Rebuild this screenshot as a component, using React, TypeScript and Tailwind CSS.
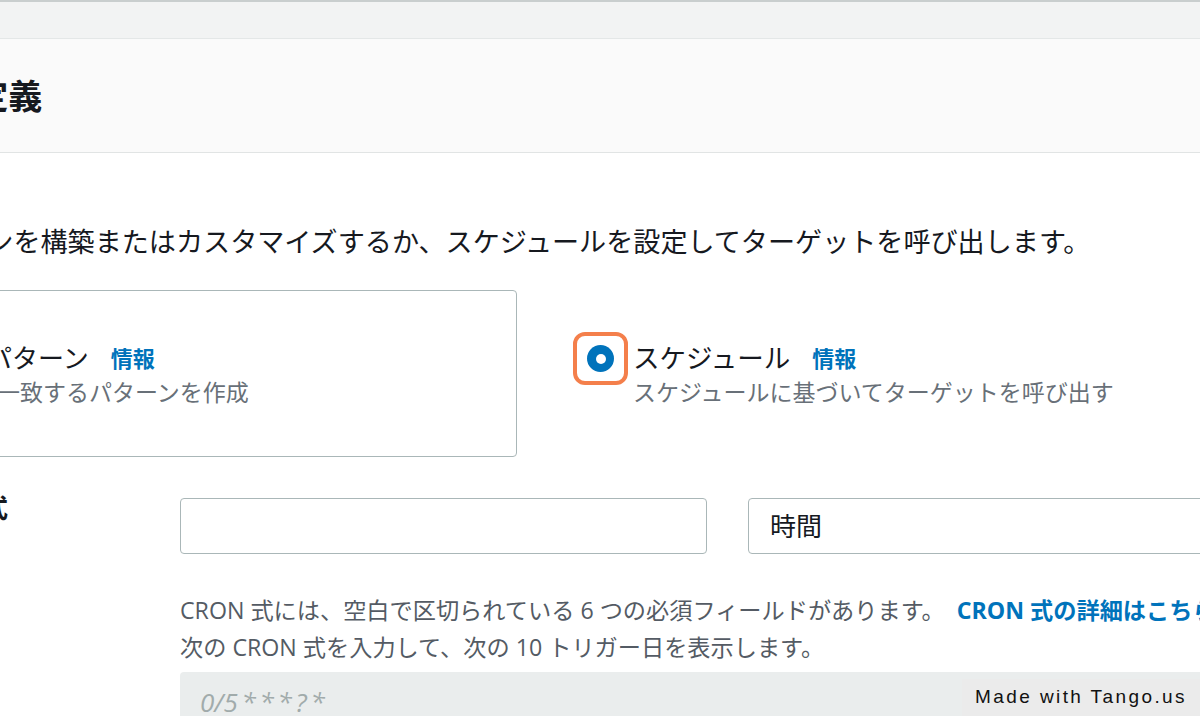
import React from 'react'

const FONT = "font-['Open_Sans','Noto_Sans_CJK_JP',sans-serif]"

function InfoLink() {
  return (
    <a className="ml-[22px] text-[22px] font-bold text-[#0073bb] leading-[34px]">
      情報
    </a>
  )
}

function ScheduleRadio() {
  return (
    <div className="flex h-[53px] w-[55px] shrink-0 items-center justify-center rounded-[12px] border-[4px] border-[#f47f4b]">
      <div className="flex h-[27px] w-[27px] items-center justify-center rounded-full bg-[#0073bb]">
        <div className="h-[10px] w-[10px] rounded-full bg-white" />
      </div>
    </div>
  )
}

export default function App() {
  return (
    <div
      className={`relative h-[716px] w-[1200px] overflow-hidden bg-white text-[#16191f] ${FONT}`}
    >
      {/* top strip */}
      <div className="h-[39px] border-t-[2px] border-b border-t-[#c9cece] border-b-[#e4e7e7] bg-[#f2f3f3]" />

      {/* page header */}
      <div className="flex h-[114px] items-center border-b border-[#e1e4e4] bg-[#fafafa]">
        <h1 className="ml-[-194px] whitespace-nowrap text-[34px] font-bold leading-none">
          パターンを定義
        </h1>
      </div>

      <p className="ml-[-202px] mt-[72px] whitespace-nowrap text-[27.1px] leading-[34px]">
        イベントパターンを構築またはカスタマイズするか、スケジュールを設定してターゲットを呼び出します。
      </p>

      {/* rule type tiles */}
      <div className="mt-[31px] flex">
        <div className="ml-[-200px] h-[167px] w-[717px] shrink-0 rounded-[4px] border border-[#aab7b8] pl-[81px] pt-[50px]">
          <div className="flex items-center whitespace-nowrap">
            <span className="text-[26px] leading-[34px]">イベントパターン</span>
            <InfoLink />
          </div>
          <div className="mt-[2px] whitespace-nowrap text-[23px] leading-[30px] text-[#687078]">
            イベントに一致するパターンを作成
          </div>
        </div>

        <div className="ml-[56px] flex items-start pt-[42px]">
          <ScheduleRadio />
          <div className="ml-[5px] mt-[9px]">
            <div className="flex items-center whitespace-nowrap">
              <span className="text-[26.5px] leading-[34px]">スケジュール</span>
              <InfoLink />
            </div>
            <div className="mt-[2px] whitespace-nowrap text-[23px] leading-[30px] text-[#687078]">
              スケジュールに基づいてターゲットを呼び出す
            </div>
          </div>
        </div>
      </div>

      {/* cron expression */}
      <div className="mt-[41px] flex items-start">
        <div className="w-[180px] shrink-0">
          <span className="ml-[-83px] block whitespace-nowrap text-[26px] font-bold leading-[20px]">
            cron 式
          </span>
        </div>
        <div className="flex-1">
          <div className="flex">
            <div className="h-[56px] w-[527px] shrink-0 rounded-[4px] border border-[#aab7b8] bg-white" />
            <div className="ml-[41px] flex h-[56px] w-[480px] shrink-0 items-center rounded-[4px] border border-[#aab7b8] bg-white pl-[21px] text-[26px]">
              時間
            </div>
          </div>

          <div className="mt-[38px] text-[23.2px] leading-[37px] text-[#545b64]">
            <p className="whitespace-nowrap">
              CRON 式には、空白で区切られている 6 つの必須フィールドがあります。
              <a className="ml-[12px] font-bold text-[#0073bb]">CRON 式の詳細はこちら</a>
            </p>
            <p className="whitespace-nowrap">
              次の CRON 式を入力して、次の 10 トリガー日を表示します。
            </p>
          </div>

          <div className="mt-[6px] flex h-[60px] items-center rounded-[4px] bg-[#eaeded] pl-[20px] text-[26px] italic text-[#a1abab] [word-spacing:-3px]">
            0/5 * * * ? *
          </div>
        </div>
      </div>

      {/* watermark */}
      <div className="absolute bottom-0 right-0 flex h-[37px] w-[238px] items-center justify-center bg-[#ebebeb] font-['Liberation_Sans',sans-serif] text-[19px] tracking-[2.4px] text-[#111]">
        Made with Tango.us
      </div>
    </div>
  )
}
